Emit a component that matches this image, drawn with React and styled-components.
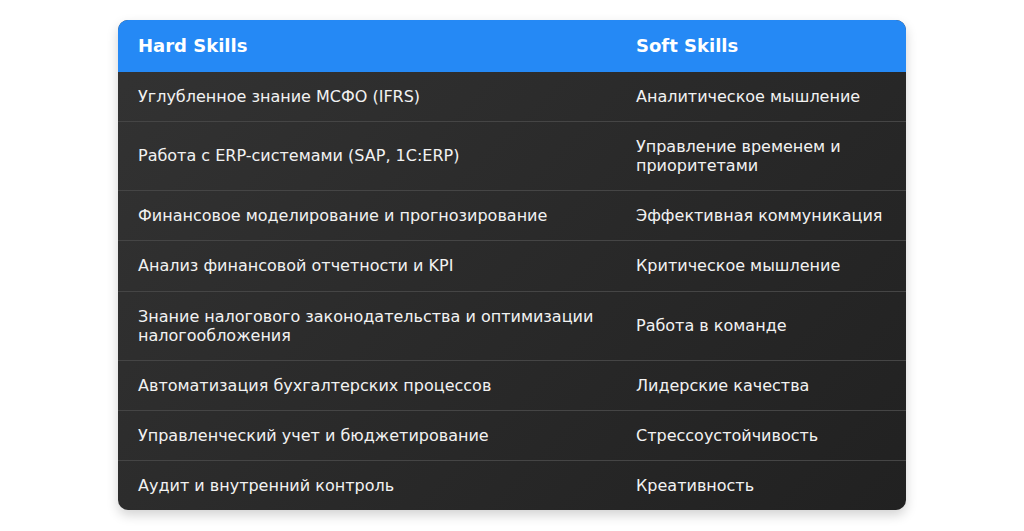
import styled, { createGlobalStyle } from "styled-components";

const skills = [
  ["Углубленное знание МСФО (IFRS)", "Аналитическое мышление"],
  ["Работа с ERP-системами (SAP, 1C:ERP)", "Управление временем и приоритетами"],
  ["Финансовое моделирование и прогнозирование", "Эффективная коммуникация"],
  ["Анализ финансовой отчетности и KPI", "Критическое мышление"],
  [
    "Знание налогового законодательства и оптимизации налогообложения",
    "Работа в команде",
  ],
  ["Автоматизация бухгалтерских процессов", "Лидерские качества"],
  ["Управленческий учет и бюджетирование", "Стрессоустойчивость"],
  ["Аудит и внутренний контроль", "Креативность"],
];

const GlobalStyle = createGlobalStyle`
  body {
    margin: 0;
    background: #fff;
    font-family: "DejaVu Sans", sans-serif;
  }
`;

const App = () => {
  return (
    <>
      <GlobalStyle />
      <Page>
        <Table>
          <thead>
            <tr>
              <Th $wide>Hard Skills</Th>
              <Th>Soft Skills</Th>
            </tr>
          </thead>
          <tbody>
            {skills.map(([hard, soft]) => (
              <Row key={hard}>
                <Td>{hard}</Td>
                <Td>{soft}</Td>
              </Row>
            ))}
          </tbody>
        </Table>
      </Page>
    </>
  );
};

const Page = styled.div`
  padding: 20px 118px;
`;
const Table = styled.table`
  width: 100%;
  border-collapse: collapse;
  border-radius: 10px;
  overflow: hidden;
  background: linear-gradient(135deg, #333333 0%, #292929 55%, #212121 100%);
  box-shadow: 0 5px 12px rgba(0, 0, 0, 0.18);
`;
const Th = styled.th`
  background: #2589f5;
  color: #fff;
  text-align: left;
  font-size: 18px;
  font-weight: bold;
  line-height: 1.2;
  padding: 15px 20px;
  width: ${(p) => (p.$wide ? "498px" : "auto")};
  box-sizing: border-box;
`;
const Row = styled.tr`
  border-top: 1px solid #454545;
  &:first-child {
    border-top: none;
  }
`;
const Td = styled.td`
  color: #f2f2f2;
  font-size: 16px;
  line-height: 1.2;
  padding: 15px 20px;
  vertical-align: middle;
`;

export default App;
